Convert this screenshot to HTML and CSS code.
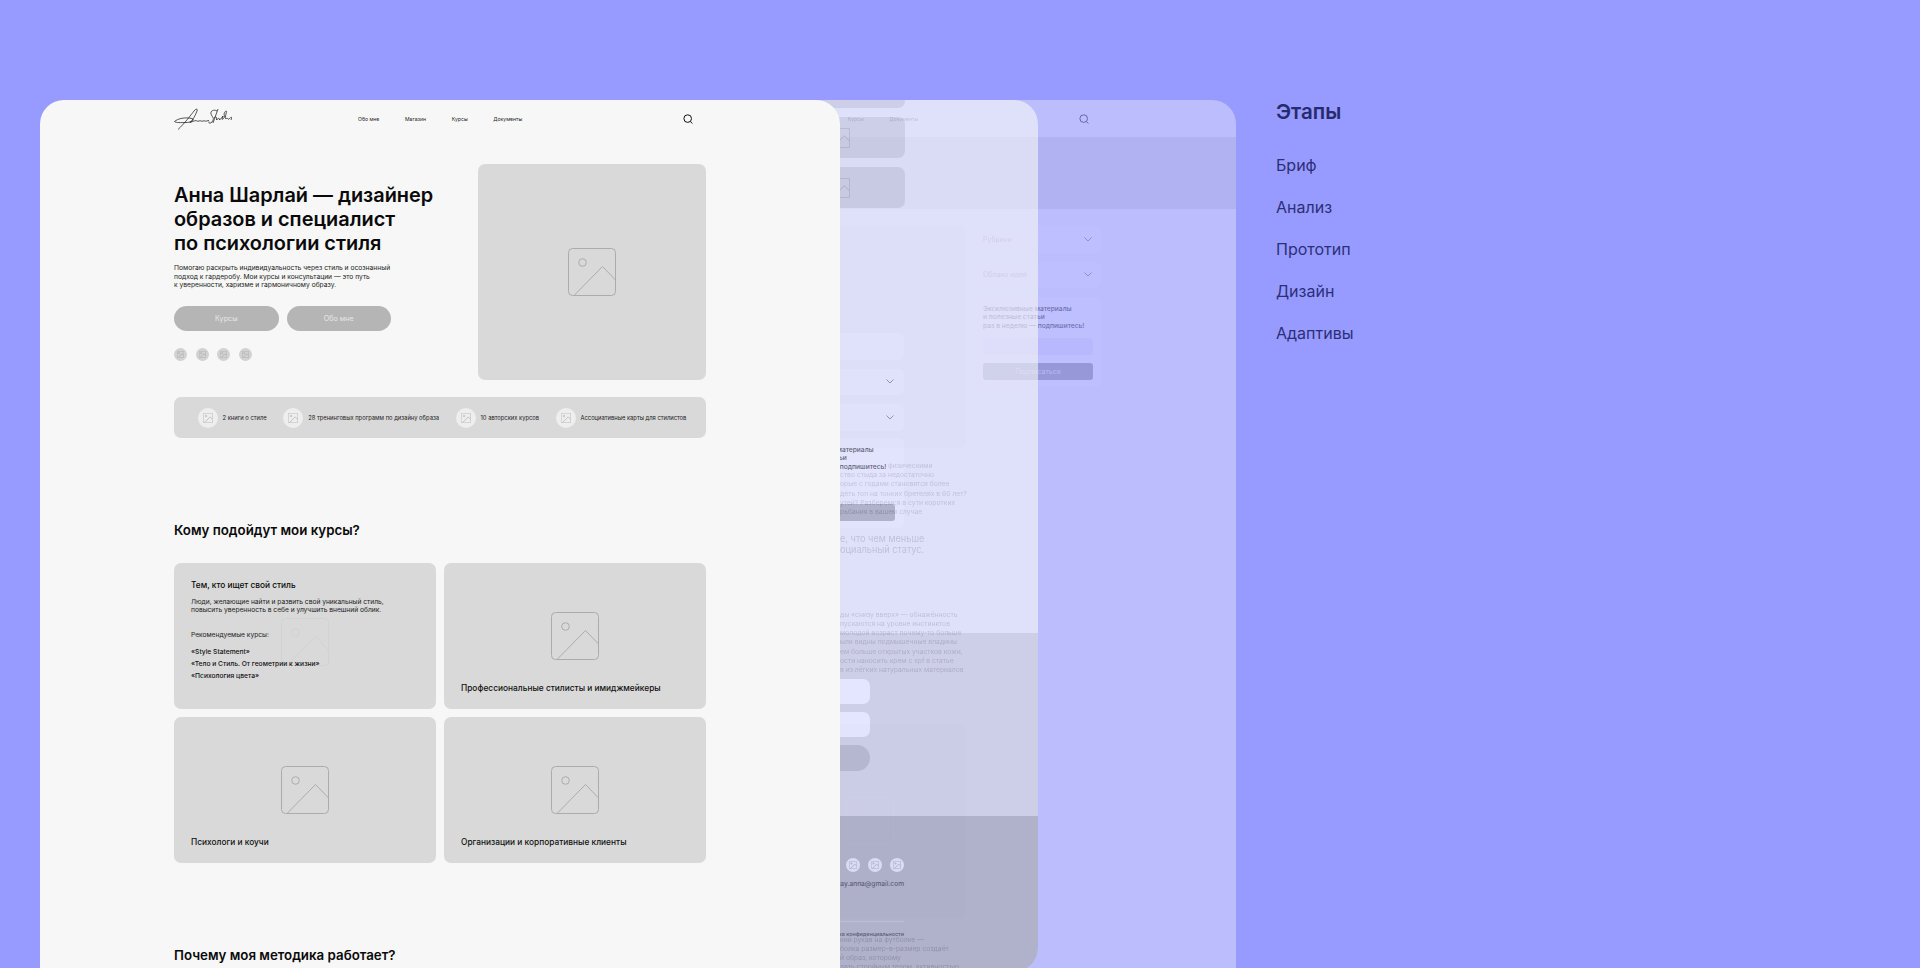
FILE: index.html
```html
<!DOCTYPE html>
<html lang="ru">
<head>
  <meta charset="UTF-8" />
  <meta name="viewport" content="width=device-width, initial-scale=1" />
  <title>Этапы</title>
  <link rel="stylesheet" href="styles.css">
</head>
<body>

<svg class="sprite" aria-hidden="true">
  <symbol id="pic" viewBox="0 0 48 48">
    <rect x="0.5" y="0.5" width="47" height="47" rx="4" fill="none" stroke="currentColor" vector-effect="non-scaling-stroke" />
    <circle cx="14.5" cy="14.5" r="3.8" fill="none" stroke="currentColor" vector-effect="non-scaling-stroke" />
    <path d="M6 47.5 34.5 18.5 47.5 32" fill="none" stroke="currentColor" vector-effect="non-scaling-stroke" />
  </symbol>
  <symbol id="chev" viewBox="0 0 8 5">
    <path d="M.5.5 4 4 7.5.5" fill="none" stroke="currentColor" stroke-width=".8" />
  </symbol>
  <symbol id="search" viewBox="0 0 10 10">
    <circle cx="4.7" cy="4.6" r="3.8" fill="none" stroke="currentColor" />
    <path d="M7.4 7.4 9.3 9.5" fill="none" stroke="currentColor" />
  </symbol>
</svg>

<!-- задний экран -->
<section class="window window-back">
  <nav class="nav">
    <span class="logo-space"></span>
    <div class="nav-links">
      <a>Обо мне</a><a>Магазин</a><a>Курсы</a><a>Документы</a>
    </div>
    <svg class="search"><use href="#search" /></svg>
  </nav>
  <div class="back-band"></div>
  <div class="back-row">
    <div class="article">
      <div class="article-panel"></div>
      <p class="frag frag-first">физическими<br>ство стыда за недостаточно<br>орые с годами становятся более<br>деть топ на тонких бретелях в 60 лет?<br>утей? Разберемся в сути коротких<br>рьбания в вашем случае</p>
      <p class="frag frag-big">е, что чем меньше<br>оциальный статус.</p>
      <p class="frag frag-third">ды «снизу вверх» — обнажённость<br>пускаются на уровне инстинктов<br>молодой возраст почему-то больше<br>ыли видны подмышечные впадины<br>ем больше открытых участков кожи,<br>ости наносить крем с spf в статье<br>я из лёгких натуральных материалов</p>
      <div class="article-panel article-photo">
        <svg class="pic-ghost"><use href="#pic" /></svg>
      </div>
      <p class="frag frag-last">кий рукав на футболке —<br>болка размер-в-размер создаёт<br>й образ, которому<br>лать стройным телом, активностью</p>
    </div>
    <aside class="side">
      <div class="select"><span>Рубрики</span><svg class="chev"><use href="#chev" /></svg></div>
      <div class="select"><span>Облако идей</span><svg class="chev"><use href="#chev" /></svg></div>
      <div class="news">
        <p>Эксклюзивные материалы<br>и полезные статьи<br>раз в неделю — подпишитесь!</p>
        <div class="news-input"></div>
        <div class="news-btn">Подписаться</div>
      </div>
    </aside>
  </div>
</section>

<!-- средний экран -->
<section class="window window-mid">
  <div class="mini-list">
    <div class="mini"><svg class="pic-mini"><use href="#pic" /></svg></div>
    <div class="mini"><svg class="pic-mini"><use href="#pic" /></svg></div>
    <div class="mini"><svg class="pic-mini"><use href="#pic" /></svg></div>
  </div>
  <div class="filter">
    <div class="select select-mid"></div>
    <div class="select select-mid"><svg class="chev"><use href="#chev" /></svg></div>
    <div class="select select-mid"><svg class="chev"><use href="#chev" /></svg></div>
    <div class="news news-mid">
      <p>Эксклюзивные материалы<br>и полезные статьи<br>раз в неделю — подпишитесь!</p>
      <div class="news-input"></div>
      <div class="news-btn"></div>
    </div>
  </div>
  <div class="mid-band">
    <div class="field"></div>
    <div class="field"></div>
    <div class="field field-pill"></div>
  </div>
  <footer class="mid-foot">
    <div class="foot-social">
      <span class="foot-dot"><svg class="pic-tiny"><use href="#pic" /></svg></span>
      <span class="foot-dot"><svg class="pic-tiny"><use href="#pic" /></svg></span>
      <span class="foot-dot"><svg class="pic-tiny"><use href="#pic" /></svg></span>
    </div>
    <div class="foot-mail">sharlay.anna@gmail.com</div>
    <div class="foot-rule"></div>
    <div class="foot-policy">Политика конфиденциальности</div>
  </footer>
</section>

<!-- передний экран -->
<section class="window window-front">
  <nav class="nav">
    <svg class="logo" viewBox="0 0 60 22" role="img" aria-label="Anna Sharlay">
      <path d="M.5 13.500C4 10.500 11 9 18 10.500 21 11.500 18 14.500 12 14.500 7 14.500 2 15 .5 13.500M4 21.500C10 16 17 7 20 3 22 .5 24 .5 23 3 21.500 7 19 12 16 14.500 20 13 22 12 23 13 24 14 26 12 27 13 28 14 30 12 31 13 32 14 34 12 35 12.500" fill="none" stroke="#111" stroke-width=".7" />
      <path d="M43 3C40 1 36 3 37 6 38 9 41 10 38 14 36 16 34 15 35 13.500M44 1 39 15M40 10C42 8 43 9 42.500 12 44 10 46 10 45.500 12 47 11 48 9 49 8 48 11 47.500 12 49 11 50 10 51 9 50 6 51 3 53.500 1 52 6 51 10 51 12 53 10 54 10 54 12 55 11 57 9 58.500 8 57 12 54 18 51.500 21" fill="none" stroke="#111" stroke-width=".7" />
    </svg>
    <div class="nav-links">
      <a>Обо мне</a><a>Магазин</a><a>Курсы</a><a>Документы</a>
    </div>
    <svg class="search"><use href="#search" /></svg>
  </nav>

  <div class="content">
    <div class="hero">
      <div class="hero-text">
        <h1>Анна Шарлай — дизайнер<br>образов и специалист<br>по психологии стиля</h1>
        <p>Помогаю раскрыть индивидуальность через стиль и осознанный<br>подход к гардеробу. Мои курсы и консультации — это путь<br>к уверенности, харизме и гармоничному образу.</p>
        <div class="hero-btns">
          <a class="btn">Курсы</a>
          <a class="btn">Обо мне</a>
        </div>
        <div class="social">
          <span class="dot"><svg class="pic-dot"><use href="#pic" /></svg></span>
          <span class="dot"><svg class="pic-dot"><use href="#pic" /></svg></span>
          <span class="dot"><svg class="pic-dot"><use href="#pic" /></svg></span>
          <span class="dot"><svg class="pic-dot"><use href="#pic" /></svg></span>
        </div>
      </div>
      <div class="hero-pic"><svg class="pic"><use href="#pic" /></svg></div>
    </div>

    <div class="stats">
      <div class="stat"><span class="stat-ico"><svg class="pic-stat"><use href="#pic" /></svg></span>2 книги о стиле</div>
      <div class="stat"><span class="stat-ico"><svg class="pic-stat"><use href="#pic" /></svg></span>28 тренинговых программ по дизайну образа</div>
      <div class="stat"><span class="stat-ico"><svg class="pic-stat"><use href="#pic" /></svg></span>10 авторских курсов</div>
      <div class="stat"><span class="stat-ico"><svg class="pic-stat"><use href="#pic" /></svg></span>Ассоциативные карты для стилистов</div>
    </div>

    <h2>Кому подойдут мои курсы?</h2>
    <div class="who">
      <div class="who-card who-open">
        <svg class="pic pic-under"><use href="#pic" /></svg>
        <h3>Тем, кто ищет свой стиль</h3>
        <p class="who-desc">Люди, желающие найти и развить свой уникальный стиль,<br>повысить уверенность в себе и улучшить внешний облик.</p>
        <p class="who-rec">Рекомендуемые курсы:</p>
        <ul class="who-list">
          <li>«Style Statement»</li>
          <li>«Тело и Стиль. От геометрии к жизни»</li>
          <li>«Психология цвета»</li>
        </ul>
      </div>
      <div class="who-card"><svg class="pic"><use href="#pic" /></svg><span class="who-name">Профессиональные стилисты и имиджмейкеры</span></div>
      <div class="who-card"><svg class="pic"><use href="#pic" /></svg><span class="who-name">Психологи и коучи</span></div>
      <div class="who-card"><svg class="pic"><use href="#pic" /></svg><span class="who-name">Организации и корпоративные клиенты</span></div>
    </div>

    <h2>Почему моя методика работает?</h2>
  </div>
</section>

<!-- этапы -->
<div class="steps">
  <h4>Этапы</h4>
  <a>Бриф</a>
  <a>Анализ</a>
  <a>Прототип</a>
  <a>Дизайн</a>
  <a>Адаптивы</a>
</div>

</body>
</html>
```

FILE: styles.css
```css
* {
  box-sizing: border-box;
}

body, html {
  margin: 0;
  padding: 0;
  height: 968px;
  overflow: hidden;
  background: #979bff;
  font-family: 'Inter', 'Noto Sans', sans-serif;
  color: #0a0a0a;
}

p, h1, h2, h3, h4, ul {
  margin: 0;
  padding: 0;
}

.sprite {
  display: none;
}

svg {
  display: block;
}

/* окна */
.window {
  position: absolute;
  top: 100px;
  width: 800px;
  height: 900px;
  background: #f7f7f7;
  border-radius: 24px;
  overflow: hidden;
}

.window-back {
  left: 436px;
  opacity: 0.38;
}

.window-mid {
  left: 238px;
  height: 872px;
  opacity: 0.6;
}

.window-front {
  left: 40px;
}

/* шапка */
.nav {
  display: flex;
  align-items: center;
  height: 38px;
  padding: 0 147px 0 134px;
}

.logo, .logo-space {
  width: 60px;
  height: 22px;
}

.nav-links {
  display: flex;
  gap: 25.700px;
  margin-left: 124px;
  font-size: 5.100px;
  color: #222;
}

.search {
  width: 10px;
  height: 10px;
  margin-left: auto;
  color: #111;
}

/* контент первого окна */
.content {
  padding: 0 134px;
}

.hero {
  display: flex;
  justify-content: space-between;
  align-items: center;
  margin-top: 26px;
}

.hero-text h1 {
  font-size: 19.900px;
  line-height: 24px;
  font-weight: 600;
}

.hero-text p {
  margin-top: 8.500px;
  font-size: 6.700px;
  line-height: 8.900px;
  color: #222;
}

.hero-btns {
  display: flex;
  gap: 8px;
  margin-top: 15.500px;
}

.btn {
  width: 104.500px;
  height: 25px;
  line-height: 25px;
  text-align: center;
  border-radius: 13px;
  background: #b5b5b5;
  color: #e6e6e6;
  font-size: 7.200px;
}

.social {
  display: flex;
  gap: 8.700px;
  margin-top: 17px;
}

.dot {
  display: flex;
  align-items: center;
  justify-content: center;
  width: 13px;
  height: 13px;
  border-radius: 50%;
  background: #d2d2d2;
}

.pic-dot {
  width: 7px;
  height: 7px;
  color: #b8b8b8;
}

.hero-pic {
  display: flex;
  align-items: center;
  justify-content: center;
  width: 228px;
  height: 216px;
  border-radius: 7px;
  background: #d9d9d9;
}

.pic {
  width: 48px;
  height: 48px;
  color: #acacac;
}

.stats {
  display: flex;
  align-items: center;
  height: 41px;
  margin-top: 17px;
  padding-left: 23.500px;
  gap: 16.500px;
  border-radius: 7px;
  background: #d9d9d9;
  font-size: 5.800px;
  color: #222;
}

.stat {
  display: flex;
  align-items: center;
  gap: 5px;
  white-space: nowrap;
}

.stat-ico {
  display: flex;
  align-items: center;
  justify-content: center;
  width: 20px;
  height: 20px;
  border-radius: 50%;
  background: #eeeeee;
}

.pic-stat {
  width: 10px;
  height: 10px;
  color: #c4c4c4;
}

h2 {
  margin-top: 83px;
  font-size: 13.300px;
  line-height: 18px;
  font-weight: 600;
}

.who {
  display: grid;
  grid-template-columns: 262px 262px;
  grid-auto-rows: 146px;
  gap: 8px;
  margin-top: 24px;
}

.who-card {
  position: relative;
  display: flex;
  flex-direction: column;
  align-items: center;
  padding: 49px 17px 0;
  border-radius: 7px;
  background: #d9d9d9;
}

.who-name {
  align-self: flex-start;
  margin-top: 22px;
  font-size: 8.350px;
  line-height: 12px;
  font-weight: 500;
  color: #111;
}

.who-open {
  display: block;
  padding-top: 16px;
}

.pic-under {
  position: absolute;
  left: 107px;
  top: 55px;
  color: #d2d2d2;
}

.who-open h3 {
  position: relative;
  font-size: 8.300px;
  line-height: 12px;
  font-weight: 500;
}

.who-desc {
  position: relative;
  margin-top: 7px;
  font-size: 6.650px;
  line-height: 8px;
  color: #222;
}

.who-rec {
  position: relative;
  margin-top: 17px;
  font-size: 6.650px;
  line-height: 8px;
  color: #222;
}

.who-list {
  position: relative;
  list-style: none;
  margin-top: 7px;
  font-size: 6.700px;
  line-height: 12px;
  font-weight: 500;
  color: #111;
}

/* этапы справа */
.steps {
  position: absolute;
  left: 1276px;
  top: 100px;
  display: flex;
  flex-direction: column;
  color: #2b2f7a;
}

.steps h4 {
  height: 24px;
  line-height: 24px;
  font-size: 20.500px;
  font-weight: 600;
  color: #262a6e;
}

.steps a {
  height: 42px;
  line-height: 42px;
  font-size: 16px;
}

.steps h4 + a {
  margin-top: 20px;
}

/* заднее окно */
.back-band {
  height: 72px;
  margin-top: -1px;
  background: #d9d9d9;
}

.back-row {
  display: flex;
  gap: 9px;
  margin-top: 17px;
  padding-left: 134px;
}

.article {
  width: 396px;
}

.article-panel {
  height: 222px;
  border-radius: 7px;
  background: #e9e9e9;
}

.frag {
  padding-left: 270px;
  white-space: nowrap;
  font-size: 6.750px;
  line-height: 9.200px;
  color: #222;
}

.frag-first {
  margin-top: 13px;
  text-indent: 48px;
}

.frag-big {
  margin-top: 16.500px;
  font-size: 9.200px;
  line-height: 11px;
}

.frag-third {
  margin-top: 55px;
}

.article-photo {
  display: flex;
  justify-content: center;
  align-items: flex-start;
  height: 194px;
  margin-top: 50px;
  padding: 73px 0 0 204px;
}

.pic-ghost {
  width: 48px;
  height: 48px;
  color: #f7f7f7;
}

.frag-last {
  margin-top: 16.500px;
}

.side {
  display: flex;
  flex-direction: column;
  gap: 9px;
  width: 126px;
}

.select {
  display: flex;
  align-items: center;
  justify-content: space-between;
  height: 26.500px;
  padding: 0 9px 0 8px;
  border-radius: 6px;
  background: #fcfcfc;
  font-size: 7px;
  color: #888;
}

.chev {
  width: 8px;
  height: 5px;
  color: #555;
}

.news {
  padding: 8px 8px 0;
  height: 90px;
  border-radius: 6px;
  background: #fcfcfc;
}

.news p {
  font-size: 6.700px;
  line-height: 8.300px;
  font-weight: 500;
  white-space: nowrap;
  color: #1c1c1c;
}

.news-input {
  height: 17px;
  margin-top: 8px;
  border-radius: 3px;
  background: #eeeaff;
}

.news-btn {
  height: 17px;
  line-height: 17px;
  margin-top: 8px;
  text-align: center;
  border-radius: 3px;
  background: #959595;
  color: #e6e6e6;
  font-size: 7px;
}

/* среднее окно */
.mini-list {
  display: flex;
  flex-direction: column;
  gap: 9px;
  width: 130px;
  margin: -33px 0 0 537px;
}

.mini {
  display: flex;
  align-items: center;
  justify-content: center;
  height: 41px;
  border-radius: 7px;
  background: #d9d9d9;
}

.pic-mini {
  width: 20px;
  height: 20px;
  color: #acacac;
}

.filter {
  display: flex;
  flex-direction: column;
  gap: 9px;
  width: 125px;
  margin: 125px 0 0 541px;
}

.select-mid {
  justify-content: flex-end;
  padding-right: 10px;
}

.news-mid {
  margin-top: -1.500px;
  padding-left: 6px;
}

.news-mid .news-btn {
  width: 110px;
  background: #a8a8a8;
}

.news-mid .news-input {
  width: 110px;
  background: #fcfcfc;
}

.mid-band {
  display: flex;
  flex-direction: column;
  gap: 8px;
  height: 183px;
  margin-top: 105px;
  padding: 46px 0 0 392px;
  background: #d9d9d9;
}

.field {
  width: 240px;
  height: 25px;
  border-radius: 7px;
  background: #fff;
}

.field-pill {
  height: 26px;
  border-radius: 13px;
  background: #b5b5b5;
}

.mid-foot {
  display: flex;
  flex-direction: column;
  align-items: flex-end;
  height: 200px;
  padding: 42px 134px 0 0;
  background: #a8a8a8;
}

.foot-social {
  display: flex;
  gap: 8px;
}

.foot-dot {
  display: flex;
  align-items: center;
  justify-content: center;
  width: 14px;
  height: 14px;
  border-radius: 50%;
  background: #f0f0f0;
}

.pic-tiny {
  width: 8px;
  height: 8px;
  color: #b0b0b0;
}

.foot-mail {
  margin-top: 6px;
  font-size: 6.600px;
  line-height: 12px;
  font-weight: 500;
  color: #222;
}

.foot-rule {
  width: 240px;
  height: 1px;
  margin-top: 31px;
  background: #bdbdbd;
}

.foot-policy {
  margin-top: 8px;
  font-size: 5.400px;
  line-height: 8px;
  font-weight: 500;
  color: #111;
}
```
